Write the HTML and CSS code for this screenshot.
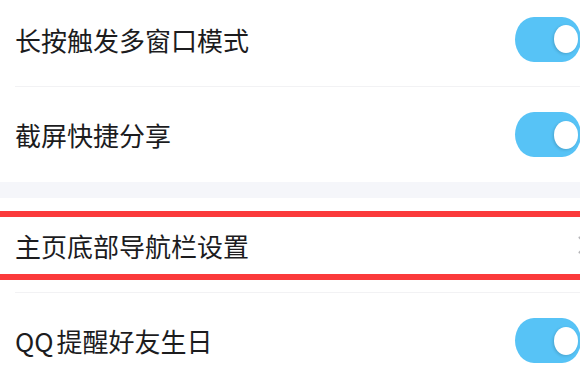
FILE: index.html
```
<!DOCTYPE html>
<html lang="zh">
<head>
<meta charset="utf-8">
<link rel="stylesheet" href="styles.css">
</head>
<body>
<div class="list">
  <div class="group">
    <div class="row">
      <span class="label">长按触发多窗口模式</span>
      <span class="toggle on"><span class="knob"></span></span>
    </div>
    <div class="row">
      <span class="label">截屏快捷分享</span>
      <span class="toggle on"><span class="knob"></span></span>
    </div>
  </div>
  <div class="gap"></div>
  <div class="group">
    <div class="row highlighted">
      <span class="label">主页底部导航栏设置</span>
      <svg class="chevron" width="10" height="18" viewBox="0 0 10 18"><path d="M1.5 1.5 L8.5 9 L1.5 16.5" fill="none" stroke="#b5b5b8" stroke-width="2" stroke-linecap="round" stroke-linejoin="round"/></svg>
      <span class="mark"></span>
    </div>
    <div class="row">
      <span class="label"><span class="latin">QQ</span>提醒好友生日</span>
      <span class="toggle on"><span class="knob"></span></span>
    </div>
  </div>
</div>
</body>
</html>
```
FILE: styles.css
```
* { box-sizing: border-box; }
html, body { margin: 0; padding: 0; background: #ffffff; overflow: hidden; }
body { width: 580px; height: 380px; }
.list {
  margin-top: -8px;
  font-family: "Noto Sans CJK SC", "Noto Sans", sans-serif;
}
.group { background: #fff; }
.row {
  position: relative;
  height: 95px;
  margin-left: 15px;
  display: flex;
  align-items: center;
  justify-content: space-between;
  border-bottom: 1px solid #f2f2f4;
}
.row:last-child { border-bottom: none; }
.label {
  font-size: 26px;
  color: #1c1c1e;
}
.latin { margin-right: 3px; }
.gap { height: 16px; background: #f5f6fa; }
.toggle {
  flex: none;
  width: 66px;
  height: 45px;
  border-radius: 19px / 22.5px;
  background: #57c3f6;
  margin-right: -1px;
  display: flex;
  align-items: center;
  justify-content: flex-end;
  padding-right: 3px;
}
.knob {
  width: 24px;
  height: 28px;
  border-radius: 50%;
  background: #fff;
  box-shadow: -1px 1px 3px rgba(0,0,0,0.16);
}
.chevron { flex: none; margin-right: -8px; }
.mark {
  position: absolute;
  left: -15px;
  right: -10px;
  top: 13px;
  bottom: 12px;
  border-top: 6px solid #fb3a3b;
  border-bottom: 6px solid #fb3a3b;
  pointer-events: none;
}
```
